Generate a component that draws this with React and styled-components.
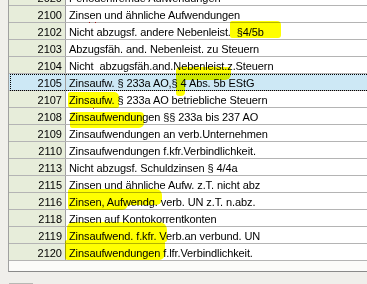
import React from "react";
import styled, { createGlobalStyle, css } from "styled-components";

const GlobalStyle = createGlobalStyle`
  html, body {
    margin: 0;
    padding: 0;
    background: #f0efeb;
    overflow: hidden;
  }
  body {
    font-family: "Liberation Sans", Arial, sans-serif;
    font-size: 11px;
    color: #000;
  }
`;

const Page = styled.div`
  position: relative;
  width: 367px;
  height: 284px;
  overflow: hidden;
`;

const Grid = styled.div`
  margin: -11px 0 0 8px;
  width: 420px;
  border-left: 1px solid #a0a0a0;
  border-bottom: 1px solid #8a8a8a;
  background: #fbfbf9;
`;

const Row = styled.div`
  position: relative;
  display: flex;
  height: 16px;
  border-bottom: 1px solid #b4b4b4;
  background: #fff;
  ${({ selected }) =>
    selected &&
    css`
      background: #cde8f5;
      &::after {
        content: "";
        position: absolute;
        left: 1px;
        top: 0;
        right: 0;
        bottom: -1px;
        border: 1px dotted #000;
      }
    `}
`;

const NumberCell = styled.div`
  width: 53px;
  flex: none;
  padding-right: 3px;
  text-align: right;
  line-height: 18px;
  background: ${({ selected }) => (selected ? "#cde8f5" : "#e7edda")};
  border-right: 1px solid #a0a0a0;
`;

const NameCell = styled.div`
  flex: 1;
  padding-left: 3px;
  line-height: 18px;
  letter-spacing: -0.1px;
  white-space: pre;
  overflow: hidden;
`;

const Filler = styled.div`
  height: 10px;
`;

const SmallButton = styled.div`
  margin: 11px 0 0 9px;
  width: 22px;
  height: 14px;
  border: 1px solid #b8b8b4;
  background: #e9e8e3;
`;

const Marks = styled.div`
  position: absolute;
  inset: 0;
  pointer-events: none;
  mix-blend-mode: multiply;
`;

const Mark = styled.span`
  position: absolute;
  left: ${({ $x }) => $x}px;
  top: ${({ $y }) => $y}px;
  width: ${({ $w }) => $w}px;
  height: ${({ $h }) => $h}px;
  background: #ffff00;
  border-radius: ${({ $r }) => $r || "3px"};
`;

const Dot = styled.span`
  position: absolute;
  left: ${({ $x }) => $x}px;
  top: ${({ $y }) => $y}px;
  width: 1px;
  height: 1px;
  background: #e02020;
`;

const accounts = [
  ["2020", "Periodenfremde Aufwendungen"],
  ["2100", "Zinsen und ähnliche Aufwendungen"],
  ["2102", "Nicht abzugsf. andere Nebenleist.  §4/5b"],
  ["2103", "Abzugsfäh. and. Nebenleist. zu Steuern"],
  ["2104", "Nicht  abzugsfäh.and.Nebenleist.z.Steuern"],
  ["2105", "Zinsaufw. § 233a AO,§ 4 Abs. 5b EStG", true],
  ["2107", "Zinsaufw. § 233a AO betriebliche Steuern"],
  ["2108", "Zinsaufwendungen §§ 233a bis 237 AO"],
  ["2109", "Zinsaufwendungen an verb.Unternehmen"],
  ["2110", "Zinsaufwendungen f.kfr.Verbindlichkeit."],
  ["2113", "Nicht abzugsf. Schuldzinsen § 4/4a"],
  ["2115", "Zinsen und ähnliche Aufw. z.T. nicht abz"],
  ["2116", "Zinsen, Aufwendg. verb. UN z.T. n.abz."],
  ["2118", "Zinsen auf Kontokorrentkonten"],
  ["2119", "Zinsaufwend. f.kfr. Verb.an verbund. UN"],
  ["2120", "Zinsaufwendungen f.lfr.Verbindlichkeit."],
];

// hand-drawn marker strokes over the list
const marks = [
  { x: 230, y: 21, w: 51, h: 17, r: "2px 4px 3px 2px" },
  { x: 176, y: 67, w: 55, h: 13, r: "4px 2px 6px 2px" },
  { x: 176, y: 74, w: 9, h: 22, r: "2px 2px 4px 3px" },
  { x: 68, y: 92, w: 51, h: 16, r: "2px 5px 2px 3px" },
  { x: 70, y: 112, w: 74, h: 16, r: "3px 4px 5px 2px" },
  { x: 68, y: 189, w: 94, h: 16, r: "2px 6px 6px 2px" },
  { x: 68, y: 196, w: 60, h: 14, r: "2px 2px 6px 3px" },
  { x: 67, y: 222, w: 100, h: 20, r: "6px 8px 2px 2px" },
  { x: 65, y: 240, w: 100, h: 20, r: "2px 3px 6px 3px" },
];

const dots = [
  [89, 22],
  [95, 22],
  [93, 108],
];

export default function App() {
  return (
    <Page>
      <GlobalStyle />
      <Grid>
        {accounts.map(([nr, name, selected]) => (
          <Row key={nr} selected={selected}>
            <NumberCell selected={selected}>{nr}</NumberCell>
            <NameCell>{name}</NameCell>
          </Row>
        ))}
        <Filler />
      </Grid>
      <SmallButton />
      <Marks>
        {marks.map((m, i) => (
          <Mark key={i} $x={m.x} $y={m.y} $w={m.w} $h={m.h} $r={m.r} />
        ))}
        {dots.map(([x, y], i) => (
          <Dot key={i} $x={x} $y={y} />
        ))}
      </Marks>
    </Page>
  );
}
